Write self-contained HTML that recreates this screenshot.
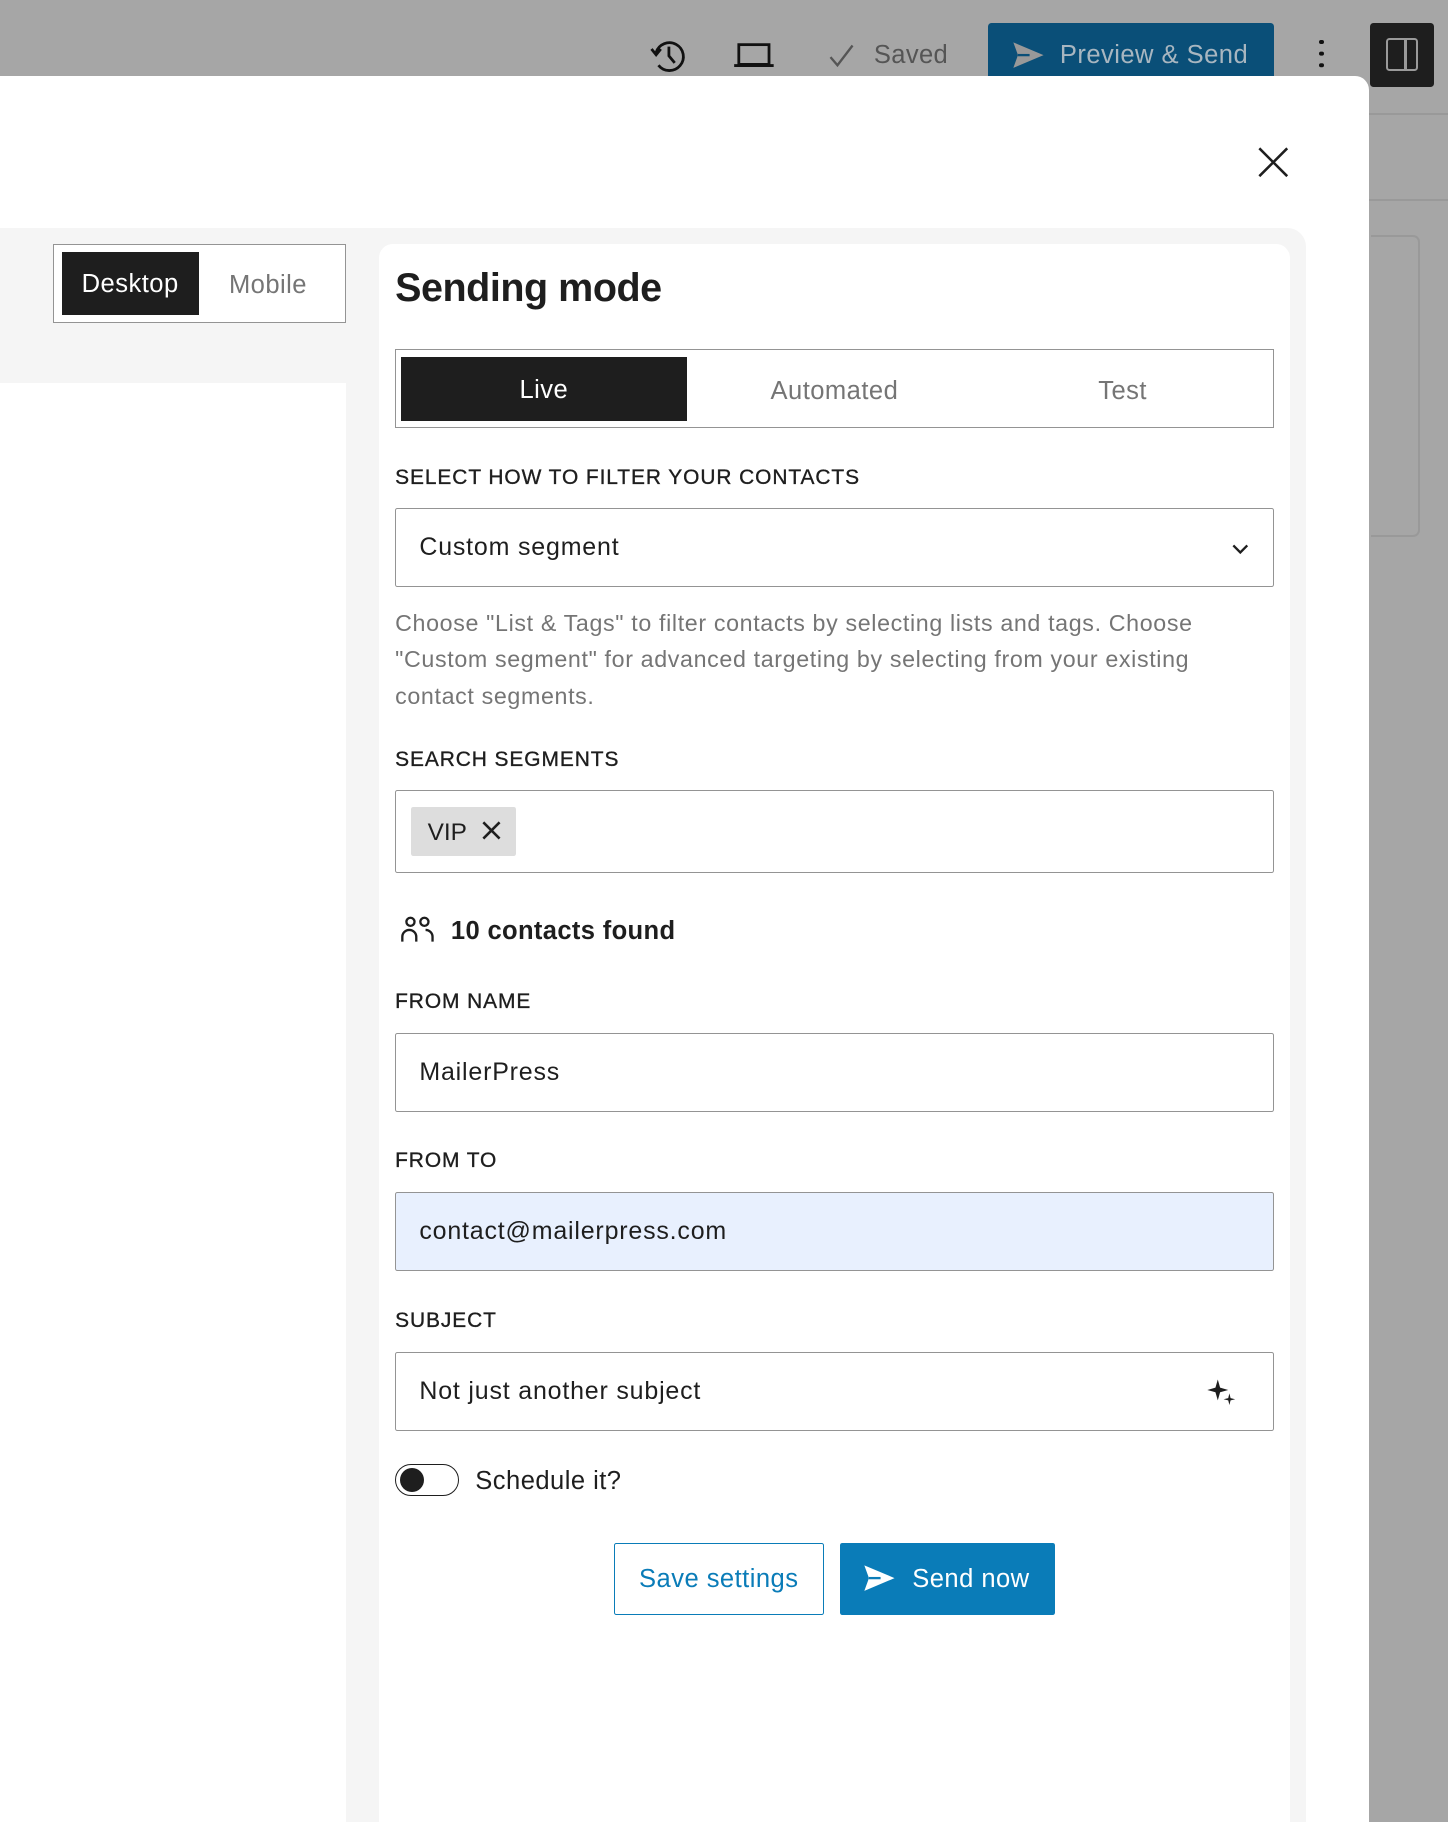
<!DOCTYPE html>
<html><head><meta charset="utf-8"><style>
*{box-sizing:border-box;margin:0;padding:0}
html,body{width:1448px;height:1822px;overflow:hidden;background:#a6a6a6;font-family:"Liberation Sans",Arial,sans-serif}
#w{position:absolute;left:0;top:0;width:1246px;height:1568px;zoom:1.16212;overflow:hidden}
.a{position:absolute}
.lbl{position:absolute;left:340px;font-size:18px;color:#1e1e1e;letter-spacing:.8px;-webkit-text-stroke:.3px #1e1e1e}
.inp{position:absolute;left:340px;width:756px;height:68px;border:1.5px solid #949494;border-radius:2px;background:#fff;font-size:21.5px;color:#1e1e1e;padding-left:20px;line-height:67px;letter-spacing:.7px}
</style></head><body><div id="w">
<div class="a" style="left:1178px;top:97px;width:68px;height:2px;background:#999"></div>
<div class="a" style="left:1178px;top:171px;width:68px;height:2px;background:#999"></div>
<div class="a" style="left:1180px;top:202px;width:42px;height:260px;border:2px solid #999;border-left:none;border-radius:0 6px 6px 0"></div>
<svg class="a" style="left:558px;top:30px" width="36" height="36" viewBox="0 0 36 36" fill="none" stroke="#111" stroke-width="2.4"><path d="M7 15 A12 12 0 1 1 9 26"/><path d="M3 12 L7 17 L11 12" /><path d="M18 10 V18 L23 24"/></svg>
<svg class="a" style="left:631px;top:34px" width="36" height="26" viewBox="0 0 36 26" fill="none" stroke="#111" stroke-width="2.4"><rect x="5" y="4" width="26" height="17"/><path d="M1 22 H35"/></svg>
<svg class="a" style="left:712px;top:36px" width="26" height="24" viewBox="0 0 26 24" fill="none" stroke="#555" stroke-width="2"><path d="M3 13 L9 20 L22 3"/></svg>
<div class="a" style="left:752px;top:35px;font-size:22px;color:#555;letter-spacing:.3px">Saved</div>
<div class="a" style="left:850px;top:20px;width:246px;height:60px;background:#0a4f78;border-radius:3px"></div>
<svg class="a" style="left:870px;top:34px" width="30" height="26" viewBox="0 0 30 26"><path d="M2 2 L28 13 L2 24 L6 13 Z" fill="#999"/><path d="M6 13 H16" stroke="#0a4f78" stroke-width="2"/></svg>
<div class="a" style="left:912px;top:35px;font-size:22px;color:#a8b6c0;letter-spacing:.4px">Preview &amp; Send</div>
<div class="a" style="left:1135px;top:34px;width:4px;height:4px;background:#111;border-radius:50%;box-shadow:0 10px 0 #111,0 20px 0 #111"></div>
<div class="a" style="left:1179px;top:20px;width:55px;height:55px;background:#1e1e1e;border-radius:3px"></div>
<div class="a" style="left:1193px;top:33px;width:27px;height:28px;border:2.4px solid #9a9a9a;border-radius:3px"></div>
<div class="a" style="left:1208px;top:33px;width:2.4px;height:28px;background:#9a9a9a"></div>
<div class="a" style="left:0;top:65px;width:1178px;height:1520px;background:#fff;border-radius:0 12px 0 0"></div>
<svg class="a" style="left:1082px;top:126px" width="28" height="28" viewBox="0 0 28 28" stroke="#1e1e1e" stroke-width="2.2"><path d="M2 2 L26 26 M26 2 L2 26"/></svg>
<div class="a" style="left:0;top:196px;width:1124px;height:1400px;background:#f5f5f5;border-radius:0 16px 0 0"></div>
<div class="a" style="left:0;top:330px;width:298px;height:1300px;background:#fff"></div>
<div class="a" style="left:46px;top:210px;width:252px;height:68px;border:1.5px solid #949494;background:#fff"></div>
<div class="a" style="left:53px;top:217px;width:118px;height:54px;background:#1e1e1e;color:#fff;font-size:22px;text-align:center;line-height:56px;letter-spacing:.4px">Desktop</div>
<div class="a" style="left:197px;top:233px;font-size:22px;color:#757575;letter-spacing:.4px">Mobile</div>
<div class="a" style="left:326px;top:210px;width:784px;height:1400px;background:#fff;border-radius:12px"></div>
<div class="a" style="left:340px;top:229px;font-size:34px;font-weight:bold;color:#1e1e1e;letter-spacing:-.4px">Sending mode</div>
<div class="a" style="left:340px;top:300px;width:756px;height:68px;border:1.5px solid #949494;background:#fff"></div>
<div class="a" style="left:345px;top:307px;width:246px;height:55px;background:#1e1e1e;color:#fff;font-size:22px;text-align:center;line-height:57px;letter-spacing:.4px">Live</div>
<div class="a" style="left:592px;top:324px;width:252px;text-align:center;font-size:22px;color:#757575;letter-spacing:.4px">Automated</div>
<div class="a" style="left:844px;top:324px;width:244px;text-align:center;font-size:22px;color:#757575;letter-spacing:.4px">Test</div>
<div class="lbl" style="top:401px">SELECT HOW TO FILTER YOUR CONTACTS</div>
<div class="inp" style="top:437px">Custom segment</div>
<svg class="a" style="left:1059px;top:466px" width="16" height="12" viewBox="0 0 16 12" fill="none" stroke="#1e1e1e" stroke-width="2"><path d="M2 3 L8 9 L14 3"/></svg>
<div class="a" style="left:340px;top:521px;width:728px;font-size:20px;line-height:31px;color:#757575;letter-spacing:.55px">Choose "List &amp; Tags" to filter contacts by selecting lists and tags. Choose "Custom segment" for advanced targeting by selecting from your existing contact segments.</div>
<div class="lbl" style="top:644px">SEARCH SEGMENTS</div>
<div class="inp" style="top:680px;height:71px"></div>
<div class="a" style="left:354px;top:694px;width:90px;height:43px;background:#ddd;border-radius:2px;font-size:21px;color:#1e1e1e;padding-left:14px;line-height:44px">VIP</div>
<svg class="a" style="left:414px;top:706px" width="18" height="18" viewBox="0 0 18 18" stroke="#1e1e1e" stroke-width="2.2"><path d="M2 2 L16 16 M16 2 L2 16"/></svg>
<svg class="a" style="left:344px;top:788px" width="32" height="24" viewBox="0 0 32 24" fill="none" stroke="#1e1e1e" stroke-width="2"><circle cx="9" cy="5" r="3.5"/><circle cx="21" cy="5" r="3.5"/><path d="M2 22 V18 A6 6 0 0 1 14 18 V22"/><path d="M22 12 A6 6 0 0 1 28 18 V22"/></svg>
<div class="a" style="left:388px;top:789px;font-size:22px;font-weight:bold;color:#1e1e1e;letter-spacing:.3px">10 contacts found</div>
<div class="lbl" style="top:852px">FROM NAME</div>
<div class="inp" style="top:889px">MailerPress</div>
<div class="lbl" style="top:989px">FROM TO</div>
<div class="inp" style="top:1026px;background:#e8f0fe">contact@mailerpress.com</div>
<div class="lbl" style="top:1126px">SUBJECT</div>
<div class="inp" style="top:1163px">Not just another subject</div>
<svg class="a" style="left:1037px;top:1184px" width="28" height="28" viewBox="0 0 28 28" fill="#1e1e1e"><path d="M11 3 L13 10 L20 12 L13 14 L11 21 L9 14 L2 12 L9 10Z"/><path d="M21 15 L22 19 L26 20 L22 21 L21 25 L20 21 L16 20 L20 19Z"/></svg>
<div class="a" style="left:340px;top:1260px;width:55px;height:27px;border:1.5px solid #1e1e1e;border-radius:14px;background:#fff"></div>
<div class="a" style="left:344px;top:1263px;width:21px;height:21px;border-radius:50%;background:#1e1e1e"></div>
<div class="a" style="left:409px;top:1262px;font-size:22px;color:#1e1e1e;letter-spacing:.4px">Schedule it?</div>
<div class="a" style="left:528px;top:1328px;width:181px;height:62px;border:1.5px solid #0a7cb8;border-radius:2px;color:#0a7cb8;font-size:22px;text-align:center;line-height:61px;letter-spacing:.4px">Save settings</div>
<div class="a" style="left:723px;top:1328px;width:185px;height:62px;background:#0a7cb8;border-radius:2px"></div>
<svg class="a" style="left:742px;top:1345px" width="30" height="26" viewBox="0 0 30 26"><path d="M2 2 L28 13 L2 24 L6 13 Z" fill="#fff"/><path d="M6 13 H16" stroke="#0a7cb8" stroke-width="2"/></svg>
<div class="a" style="left:785px;top:1347px;font-size:22px;color:#fff;letter-spacing:.4px">Send now</div>
</div></body></html>
